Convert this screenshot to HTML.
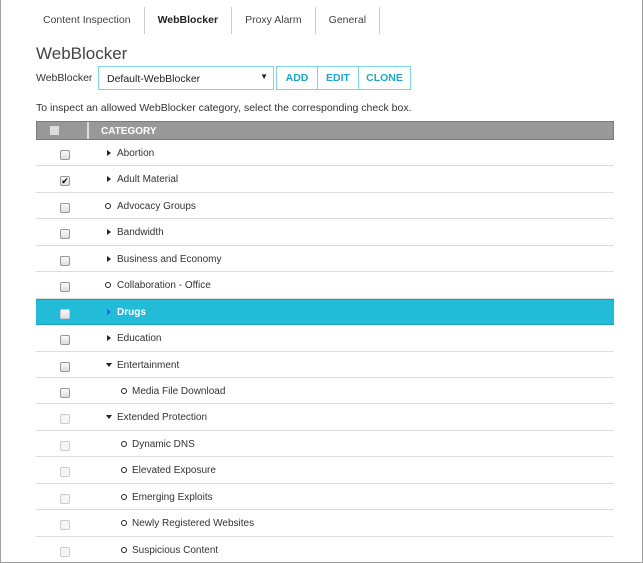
<!DOCTYPE html>
<html><head><meta charset="utf-8"><style>
*{margin:0;padding:0;box-sizing:border-box}
body{width:643px;height:563px;overflow:hidden;background:#fff;font-family:"Liberation Sans",sans-serif;color:#333;position:relative}
.frame{position:absolute;left:0;top:0;width:643px;height:563px;border:1px solid #a0a0a0;border-top:none}
.tabs{position:absolute;top:7px;left:30px;height:27px;display:flex;font-size:10.5px}
.tab{padding:0 13px;line-height:27px;border-right:1px solid #ccc;color:#444}
.tab.a{font-weight:bold;color:#222}
h1{position:absolute;left:36px;top:44px;font-size:17px;font-weight:normal;color:#444}
.lbl{position:absolute;left:36px;top:72px;font-size:10.5px}
.sel{position:absolute;left:98px;top:66px;width:176px;height:24px;border:1px solid #7fd3e6;font-size:10.5px;padding:6px 0 0 8px;color:#222}
.sel span{position:absolute;right:5px;top:5px;font-size:8px}
.btn{position:absolute;top:66px;height:24px;border:1px solid #7fd3e6;color:#1ea7cc;font-weight:bold;font-size:10.5px;text-align:center;line-height:22px}
.ins{position:absolute;left:36px;top:102px;font-size:10.5px}
.hd{position:absolute;left:36px;top:121px;width:578px;height:19px;background:#999;border:1px solid #7a7a7a;color:#fff;font-weight:bold;font-size:10px}
.hd .c1{position:absolute;left:0;top:0;width:52px;height:17px;border-right:2px solid #ddd}
.hd .t{position:absolute;left:64px;top:4px}
.hcb{position:absolute;left:13px;top:4px;width:9px;height:9px;background:#ddd}
.rows{position:absolute;left:36px;top:140px;width:578px}
.r{height:26.45px;border-bottom:1px solid #ddd;position:relative;font-size:10px;color:#333}
.r.s{background:#22bcd9;color:#fff;font-weight:bold;border-bottom:1px solid #1ba0bd;border-top:1px solid #1ba0bd}
.cb{position:absolute;left:24px;top:10px;width:10px;height:10px;border:1px solid #999;border-radius:2px;background:linear-gradient(#fafafa,#ddd)}
.cb.l{border-color:#ccc;background:#f5f5f5}
.r .tx{position:absolute;top:8px}
.tri{position:absolute;top:10px;width:0;height:0;border-top:3px solid transparent;border-bottom:3px solid transparent;border-left:4px solid #222}
.dn{position:absolute;top:11px;width:0;height:0;border-left:3px solid transparent;border-right:3px solid transparent;border-top:4px solid #222}
.o{position:absolute;top:10px;width:6px;height:6px;border:1.3px solid #222;border-radius:50%}
</style></head><body>
<div class="tabs"><div class="tab">Content Inspection</div><div class="tab a">WebBlocker</div><div class="tab">Proxy Alarm</div><div class="tab">General</div></div>
<h1>WebBlocker</h1>
<div class="lbl">WebBlocker</div>
<div class="sel">Default-WebBlocker<span>▼</span></div>
<div class="btn" style="left:276px;width:42px">ADD</div>
<div class="btn" style="left:317px;width:42px">EDIT</div>
<div class="btn" style="left:358px;width:53px">CLONE</div>
<div class="ins">To inspect an allowed WebBlocker category, select the corresponding check box.</div>
<div class="hd"><div class="c1"><div class="hcb"></div></div><div class="t">CATEGORY</div></div>
<div class="rows">
<div class="r"><div class="cb"></div><div class="tri" style="left:71px"></div><div class="tx" style="left:81px">Abortion</div></div>
<div class="r"><div class="cb" style="font-size:9px;line-height:8px;text-align:center;color:#000">✔</div><div class="tri" style="left:71px"></div><div class="tx" style="left:81px">Adult Material</div></div>
<div class="r"><div class="cb"></div><div class="o" style="left:69px"></div><div class="tx" style="left:81px">Advocacy Groups</div></div>
<div class="r"><div class="cb"></div><div class="tri" style="left:71px"></div><div class="tx" style="left:81px">Bandwidth</div></div>
<div class="r"><div class="cb"></div><div class="tri" style="left:71px"></div><div class="tx" style="left:81px">Business and Economy</div></div>
<div class="r"><div class="cb"></div><div class="o" style="left:69px"></div><div class="tx" style="left:81px">Collaboration - Office</div></div>
<div class="r s"><div class="cb" style="top:9px;border-color:#ccc"></div><div class="tri" style="left:71px;top:9px;border-left-color:#2a5fe0"></div><div class="tx" style="left:81px;top:7px">Drugs</div></div>
<div class="r"><div class="cb"></div><div class="tri" style="left:71px"></div><div class="tx" style="left:81px">Education</div></div>
<div class="r"><div class="cb"></div><div class="dn" style="left:70px"></div><div class="tx" style="left:81px">Entertainment</div></div>
<div class="r"><div class="cb"></div><div class="o" style="left:85px"></div><div class="tx" style="left:96px">Media File Download</div></div>
<div class="r"><div class="cb l"></div><div class="dn" style="left:70px"></div><div class="tx" style="left:81px">Extended Protection</div></div>
<div class="r"><div class="cb l"></div><div class="o" style="left:85px"></div><div class="tx" style="left:96px">Dynamic DNS</div></div>
<div class="r"><div class="cb l"></div><div class="o" style="left:85px"></div><div class="tx" style="left:96px">Elevated Exposure</div></div>
<div class="r"><div class="cb l"></div><div class="o" style="left:85px"></div><div class="tx" style="left:96px">Emerging Exploits</div></div>
<div class="r"><div class="cb l"></div><div class="o" style="left:85px"></div><div class="tx" style="left:96px">Newly Registered Websites</div></div>
<div class="r" style="border:none"><div class="cb l"></div><div class="o" style="left:85px"></div><div class="tx" style="left:96px">Suspicious Content</div></div>
</div>
<div class="frame"></div>
</body></html>
